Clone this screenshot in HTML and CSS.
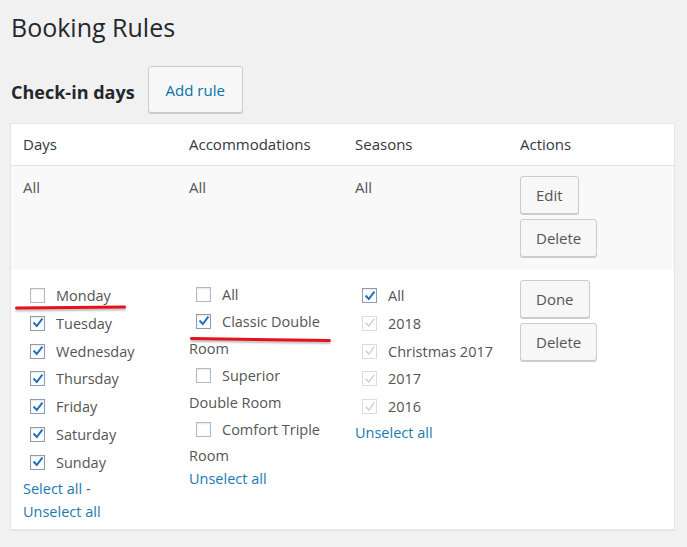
FILE: index.html
```html
<!DOCTYPE html>
<html>
<head>
<meta charset="utf-8">
<link rel="stylesheet" href="styles.css">
</head>
<body>
<h1 class="title">Booking Rules</h1>
<div class="section-head">
  <h2 class="section-title">Check-in days</h2>
  <button class="btn btn-primary-link">Add rule</button>
</div>
<div class="card">
  <div class="row head">
    <div class="cell">Days</div>
    <div class="cell">Accommodations</div>
    <div class="cell">Seasons</div>
    <div class="cell">Actions</div>
  </div>
  <div class="row alt">
    <div class="cell">All</div>
    <div class="cell">All</div>
    <div class="cell">All</div>
    <div class="cell actions">
      <button class="btn">Edit</button>
      <button class="btn">Delete</button>
    </div>
  </div>
  <div class="row edit">
    <div class="cell list">
      <label class="item"><span class="cb"></span>Monday</label>
      <label class="item"><span class="cb on"><svg viewBox="0 0 14 14"><path d="M3.2 7.2 L5.8 10 L10.8 3.4"/></svg></span>Tuesday</label>
      <label class="item"><span class="cb on"><svg viewBox="0 0 14 14"><path d="M3.2 7.2 L5.8 10 L10.8 3.4"/></svg></span>Wednesday</label>
      <label class="item"><span class="cb on"><svg viewBox="0 0 14 14"><path d="M3.2 7.2 L5.8 10 L10.8 3.4"/></svg></span>Thursday</label>
      <label class="item"><span class="cb on"><svg viewBox="0 0 14 14"><path d="M3.2 7.2 L5.8 10 L10.8 3.4"/></svg></span>Friday</label>
      <label class="item"><span class="cb on"><svg viewBox="0 0 14 14"><path d="M3.2 7.2 L5.8 10 L10.8 3.4"/></svg></span>Saturday</label>
      <label class="item"><span class="cb on"><svg viewBox="0 0 14 14"><path d="M3.2 7.2 L5.8 10 L10.8 3.4"/></svg></span>Sunday</label>
      <div class="links"><a class="link">Select all</a> -<br><a class="link">Unselect all</a></div>
    </div>
    <div class="cell list accom">
      <label class="item"><span class="cb"></span>All</label>
      <label class="item"><span class="cb on"><svg viewBox="0 0 14 14"><path d="M3.2 7.2 L5.8 10 L10.8 3.4"/></svg></span>Classic Double Room</label>
      <label class="item"><span class="cb"></span>Superior Double Room</label>
      <label class="item"><span class="cb"></span>Comfort Triple Room</label>
      <div class="links accom-links"><a class="link">Unselect all</a></div>
    </div>
    <div class="cell list">
      <label class="item"><span class="cb on"><svg viewBox="0 0 14 14"><path d="M3.2 7.2 L5.8 10 L10.8 3.4"/></svg></span>All</label>
      <label class="item"><span class="cb dis"><svg viewBox="0 0 14 14"><path d="M3.2 7.2 L5.8 10 L10.8 3.4"/></svg></span>2018</label>
      <label class="item"><span class="cb dis"><svg viewBox="0 0 14 14"><path d="M3.2 7.2 L5.8 10 L10.8 3.4"/></svg></span>Christmas 2017</label>
      <label class="item"><span class="cb dis"><svg viewBox="0 0 14 14"><path d="M3.2 7.2 L5.8 10 L10.8 3.4"/></svg></span>2017</label>
      <label class="item"><span class="cb dis"><svg viewBox="0 0 14 14"><path d="M3.2 7.2 L5.8 10 L10.8 3.4"/></svg></span>2016</label>
      <div class="links"><a class="link">Unselect all</a></div>
    </div>
    <div class="cell actions">
      <button class="btn">Done</button>
      <button class="btn">Delete</button>
    </div>
  </div>
</div>
<div class="mark mark-monday"></div>
<div class="mark mark-classic"></div>
</body>
</html>
```
FILE: styles.css
```css
html, body {
  margin: 0;
  padding: 0;
}
body {
  background: #f1f1f1;
  font-family: "Open Sans", "Noto Sans", sans-serif;
  color: #555;
  padding: 0 12px 0 10px;
  position: relative;
  height: 547px;
  box-sizing: border-box;
}
.title {
  margin: 0;
  padding: 12px 0 0 1px;
  font-size: 25px;
  font-weight: 400;
  line-height: 30px;
  color: #23282d;
}
.section-head {
  display: flex;
  align-items: center;
  gap: 13px;
  margin-top: 24px;
  margin-bottom: 10px;
}
.section-title {
  margin: 0 0 0 1px;
  font-size: 18px;
  font-weight: 700;
  color: #23282d;
  line-height: 24px;
  padding-top: 5px;
}
.btn {
  display: block;
  font-family: inherit;
  font-size: 15px;
  color: #555;
  background: #f7f7f7;
  border: 1px solid #cccccc;
  border-radius: 3px;
  box-shadow: 0 1px 0 #cccccc;
  padding: 0 15px;
  height: 38px;
  line-height: 36px;
  cursor: pointer;
}
.btn-primary-link {
  color: #0073aa;
  font-size: 15px;
  height: 47px;
  padding: 0 17px;
}
.card {
  background: #fff;
  border: 1px solid #e5e5e5;
  box-shadow: 0 1px 1px rgba(0,0,0,.04);
  font-size: 15px;
}
.row {
  display: grid;
  grid-template-columns: 166px 166px 165px 1fr;
}
.row.head {
  border-bottom: 1px solid #e1e1e1;
  color: #32373c;
}
.row.alt {
  background: #f9f9f9;
}
.cell {
  padding: 10px 12px 11px 12px;
  line-height: 20px;
}
.row.alt .cell {
  padding-top: 11px;
  padding-bottom: 13px;
}
.row.alt .actions {
  padding-top: 10px;
  padding-bottom: 13px;
}
.actions .btn + .btn {
  margin-top: 5px;
}
.row.edit {
  font-size: 14.5px;
}
.row.edit .cell {
  padding-top: 12px;
  padding-bottom: 6px;
}
.row.edit .actions {
  padding-top: 10px;
}
.item {
  display: block;
  line-height: 27.8px;
}
.accom .item {
  line-height: 26.9px;
}
.cb {
  display: inline-block;
  width: 15px;
  height: 15px;
  box-sizing: border-box;
  border: 1px solid #b4b9be;
  background: #fff;
  box-shadow: inset 0 1px 2px rgba(0,0,0,.1);
  margin: 0 11px 0 7px;
  vertical-align: -2px;
  position: relative;
}
.cb svg {
  position: absolute;
  left: -0.5px;
  top: -0.5px;
  width: 14px;
  height: 14px;
  fill: none;
  stroke: #1e6fbe;
  stroke-width: 2;
  stroke-linecap: square;
}
.cb.on {
  border-color: #8f9bb0;
}
.cb.dis {
  border-color: #dcdcdc;
  box-shadow: none;
}
.cb.dis svg {
  stroke: #c8c8c8;
  stroke-width: 1.2;
}
.links {
  line-height: 23px;
}
.accom-links {
  margin-top: -3px;
}
.link {
  color: #1a7ab0;
  text-decoration: none;
}
.mark {
  position: absolute;
  height: 3px;
  background: #e8101a;
  border-radius: 2px;
  box-shadow: 0 2px 2px rgba(0,0,0,.25);
}
.mark-monday {
  left: 15px;
  top: 306px;
  width: 111px;
  transform: rotate(-0.4deg);
}
.mark-classic {
  left: 190px;
  top: 338px;
  width: 141px;
  transform: rotate(0.8deg);
}
```
